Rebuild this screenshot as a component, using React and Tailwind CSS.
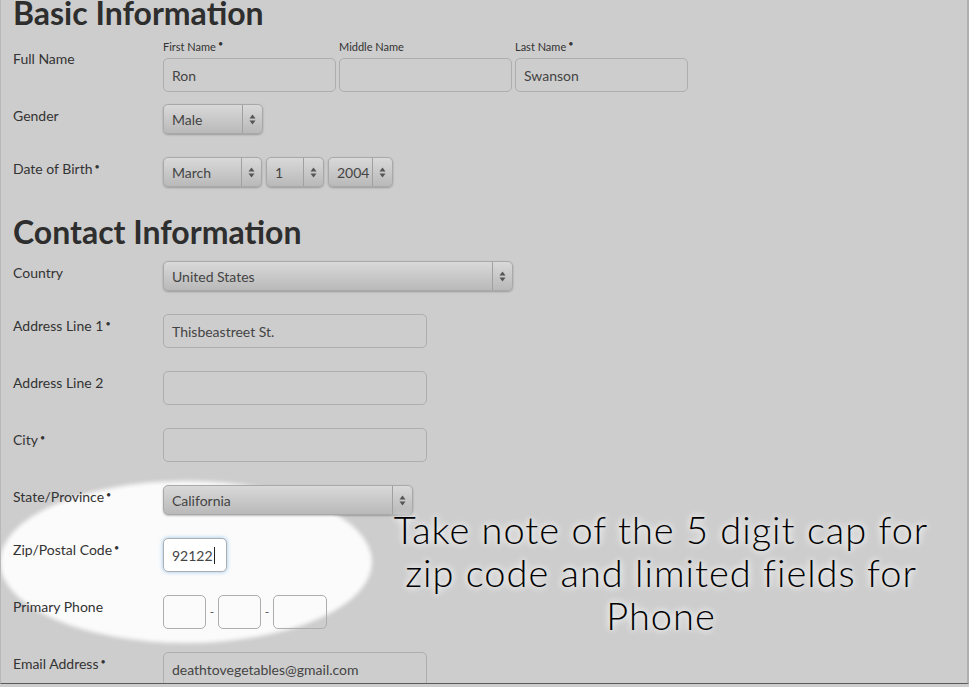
import React from 'react';

const Req = () => <sup className="ml-[2px] text-[9px] top-[-4px]">•</sup>;

const Arrows = () => (
  <svg width="7" height="11" viewBox="0 0 7 11">
    <path d="M3.5 0.5 L6.5 4.5 L0.5 4.5 Z" fill="#555" />
    <path d="M3.5 10.5 L6.5 6.5 L0.5 6.5 Z" fill="#555" />
  </svg>
);

const Select = ({ value, className }) => (
  <div
    className={`flex h-[30px] items-stretch rounded-[5px] border border-[#a9a9a9] bg-gradient-to-b from-[#d9d9d9] to-[#b9b9b9] shadow-[0_1px_2px_rgba(0,0,0,0.25)] ${className}`}
  >
    <div className="flex flex-1 items-center pl-[8px] text-[14px] text-[#444]">{value}</div>
    <div className="flex w-[20px] items-center justify-center border-l border-[#a0a0a0]">
      <Arrows />
    </div>
  </div>
);

const Input = ({ value, className = 'w-[264px]', children }) => (
  <div
    className={`flex h-[34px] items-center rounded-[5px] border border-[#aeaeae] pl-[8px] text-[14px] text-[#444] ${className}`}
  >
    {value}
    {children}
  </div>
);

const Row = ({ label, children, className = 'mt-[23px]' }) => (
  <div className={`flex ${className}`}>
    <div className="w-[150px] shrink-0 text-[14px] leading-[24px] text-[#333]">{label}</div>
    {children}
  </div>
);

const App = () => {
  return (
    <div
      className="relative h-[687px] w-[969px] overflow-hidden bg-[#cdcdcd]"
      style={{ fontFamily: 'Lato, "Open Sans", sans-serif' }}
    >
      {/* white highlight behind zip/phone */}
      <div className="absolute left-[0px] top-[481px] h-[162px] w-[372px] rounded-[50%] bg-[#fbfbfb] blur-[2px]" />

      <div className="relative h-[684px] overflow-hidden border-b border-l border-r-2 border-b-[#5a5a5a] border-l-[#b8b8b8] border-r-[#b0b0b0] pl-[12px]">
        <h1 className="mt-[-7px] text-[32px] font-bold leading-[40px] text-[#2e2e2e]">Basic Information</h1>

        <div className="mt-[8px] flex">
          <div className="w-[150px] shrink-0 pt-[6px] text-[14px] leading-[24px] text-[#333]">Full Name</div>
          <div className="flex gap-[3px]">
            {[
              ['First Name', 'Ron', true],
              ['Middle Name', '', false],
              ['Last Name', 'Swanson', true],
            ].map(([l, v, r]) => (
              <div key={l}>
                <div className="h-[17px] text-[11px] leading-[12px] text-[#333]">
                  {l}
                  {r && <Req />}
                </div>
                <Input value={v} className="w-[173px]" />
              </div>
            ))}
          </div>
        </div>

        <Row label="Gender" className="mt-[12px]">
          <Select value="Male" className="w-[100px]" />
        </Row>

        <Row label={<>Date of Birth<Req /></>}>
          <div className="flex gap-[4px]">
            <Select value="March" className="w-[99px]" />
            <Select value="1" className="w-[58px]" />
            <Select value="2004" className="w-[65px]" />
          </div>
        </Row>

        <h1 className="mt-[25px] text-[32px] font-bold leading-[40px] text-[#2e2e2e]">Contact Information</h1>

        <Row label="Country" className="mt-[9px]">
          <Select value="United States" className="w-[350px]" />
        </Row>

        <Row label={<>Address Line 1<Req /></>}>
          <Input value="Thisbeastreet St." />
        </Row>
        <Row label="Address Line 2">
          <Input value="" />
        </Row>
        <Row label={<>City<Req /></>}>
          <Input value="" />
        </Row>
        <Row label={<>State/Province<Req /></>}>
          <Select value="California" className="w-[250px]" />
        </Row>
        <Row label={<>Zip/Postal Code<Req /></>} className="mt-[23px]">
          <Input
            value="92122"
            className="w-[64px] border-[#69aee6] bg-white shadow-[0_0_4px_rgba(80,160,230,0.6)]"
          >
            <span className="ml-[1px] h-[17px] w-px bg-[#222]" />
          </Input>
        </Row>
        <Row label="Primary Phone">
          <div className="flex items-center">
            <Input value="" className="w-[43px]" />
            <span className="w-[12px] text-center text-[12px] text-[#555]">-</span>
            <Input value="" className="w-[43px]" />
            <span className="w-[12px] text-center text-[12px] text-[#555]">-</span>
            <Input value="" className="w-[54px]" />
          </div>
        </Row>
        <Row label={<>Email Address<Req /></>}>
          <Input value="deathtovegetables@gmail.com" />
        </Row>
      </div>

      <div
        className="absolute left-[381px] top-[508px] w-[560px] text-center text-[38px] font-light leading-[43px] tracking-[1px] text-black"
        style={{ textShadow: '0 0 6px #fff, 0 0 10px #fff' }}
      >
        Take note of the 5 digit cap for
        <br />
        zip code and limited fields for
        <br />
        Phone
      </div>
    </div>
  );
};

export default App;
